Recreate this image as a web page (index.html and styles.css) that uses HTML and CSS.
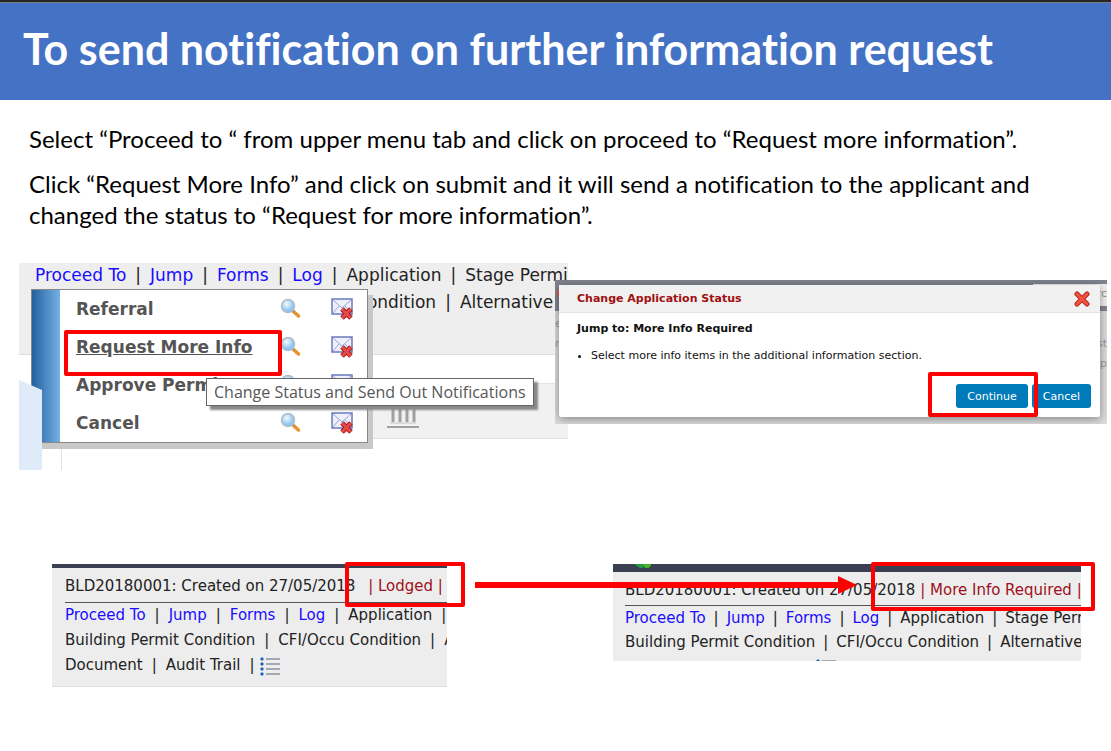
FILE: index.html
```html
<!DOCTYPE html>
<html lang="en">
<head>
    <meta charset="UTF-8">
    <meta name="viewport" content="width=device-width, initial-scale=1.0">
    <title>To send notification on further information request</title>
    <link rel="stylesheet" href="styles.css">
</head>
<body>
    <svg class="defs" aria-hidden="true">
        <defs>
            <radialGradient id="glass" cx="40%" cy="35%">
                <stop offset="0" stop-color="#f4fbff"/>
                <stop offset="1" stop-color="#8cc6f4"/>
            </radialGradient>
            <symbol id="search" viewBox="0 0 22 22">
                <path d="M13.500 13.500 18.500 18" stroke="#e8932c" stroke-width="3.500" stroke-linecap="round"/>
                <path d="M12 12l2 2" stroke="#8a8f98" stroke-width="2"/>
                <circle cx="8" cy="8" r="6.500" fill="url(#glass)" stroke="#b4bcc8" stroke-width="1.500"/>
            </symbol>
            <symbol id="mail" viewBox="0 0 22 22">
                <rect x="1" y="1" width="20" height="15" fill="#eef1fb" stroke="#6a78bd" stroke-width="1.500"/>
                <path d="M2 2l9 8L20 2M2 15l6-7M20 15l-6-7" fill="none" stroke="#98a3d2"/>
                <path d="M11 11l9 9M20 11l-9 9" stroke="#a31c1c" stroke-width="5"/>
                <path d="M11 11l9 9M20 11l-9 9" stroke="#e84848" stroke-width="3"/>
            </symbol>
        </defs>
    </svg>

    <header>
        <h1>To send notification on further information request</h1>
    </header>

    <main>
        <div class="intro">
            <p>Select “Proceed to “ from upper menu tab and click on proceed to “Request more information”.</p>
            <p>Click “Request More Info” and click on submit and it will send a notification to the applicant and changed the status to “Request for more information”.</p>
        </div>

        <div class="row steps">
            <div class="figure menu-figure">
                <div class="shot menu-shot">
                    <div class="menu-top">
                        <nav class="tabs">
                            <a href="#">Proceed To</a><i>|</i><a href="#">Jump</a><i>|</i><a href="#">Forms</a><i>|</i><a href="#">Log</a><i>|</i><span>Application</span><i>|</i><span>Stage Permit</span>
                        </nav>
                        <div class="tabs">
                            <span>Building Permit Condition</span><i>|</i><span>CFI/Occu Condition</span><i>|</i><span>Alternative</span>
                        </div>
                    </div>
                    <div class="menu-band">
                        <svg class="bank" viewBox="0 0 34 34"><path d="M1 33h32" stroke="#a0a0a0" stroke-width="2"/><path d="M7 10v18M14 10v18M21 10v18M28 10v18" stroke="#a0a0a0" stroke-width="3"/><path d="M4 29h26" stroke="#c4c4c4"/></svg>
                    </div>
                    <ul class="popup">
                        <li><a href="#">Referral</a><svg><use href="#search"/></svg><svg><use href="#mail"/></svg></li>
                        <li class="active"><a href="#">Request More Info</a><svg><use href="#search"/></svg><svg><use href="#mail"/></svg></li>
                        <li><a href="#">Approve Permit</a><svg><use href="#search"/></svg><svg><use href="#mail"/></svg></li>
                        <li><a href="#">Cancel</a><svg><use href="#search"/></svg><svg><use href="#mail"/></svg></li>
                    </ul>
                    <div class="corner"></div>
                    <div class="tooltip">Change Status and Send Out Notifications</div>
                </div>
                <div class="mark mark-request"></div>
            </div>

            <div class="figure dialog-figure">
                <div class="shot backdrop">
                    <div class="behind-left"><b></b><span>e</span><span>m</span></div>
                    <div class="behind-right"><em>rc</em><span>st</span><span>Ap</span></div>
                    <section class="dialog">
                        <div class="dialog-head">
                            <h2>Change Application Status</h2>
                            <button class="close" aria-label="Close">
                                <svg viewBox="0 0 16 16"><path d="M3 3l10 10M13 3L3 13" stroke="#b5291f" stroke-width="5" stroke-linecap="round"/><path d="M3 3l10 10M13 3L3 13" stroke="#f4513f" stroke-width="3" stroke-linecap="round"/></svg>
                            </button>
                        </div>
                        <div class="dialog-body">
                            <h3>Jump to: More Info Required</h3>
                            <ul><li>Select more info items in the additional information section.</li></ul>
                            <div class="actions">
                                <button class="btn">Continue</button>
                                <button class="btn">Cancel</button>
                            </div>
                        </div>
                    </section>
                </div>
                <div class="mark mark-continue"></div>
            </div>
        </div>

        <div class="row result">
            <div class="figure before">
                <div class="shot record">
                    <div class="strip"></div>
                    <p class="status">BLD20180001: Created on 27/05/2018 <span>| Lodged |</span></p>
                    <nav class="tabs">
                        <a href="#">Proceed To</a><i>|</i><a href="#">Jump</a><i>|</i><a href="#">Forms</a><i>|</i><a href="#">Log</a><i>|</i><span>Application</span><i>|</i>
                    </nav>
                    <div class="tabs"><span>Building Permit Condition</span><i>|</i><span>CFI/Occu Condition</span><i>|</i><span>Alternative</span></div>
                    <div class="tabs">
                        <span>Document</span><i>|</i><span>Audit Trail</span><i>|</i>
                        <svg class="list" viewBox="0 0 20 20"><path d="M6 3h14M6 8h14M6 13h14M6 18h14" stroke="#8b949e" stroke-width="1.500"/><path d="M2 1l2 2-2 2-2-2zM2 6l2 2-2 2-2-2zM2 11l2 2-2 2-2-2zM2 16l2 2-2 2-2-2z" fill="#1d5fc4"/></svg>
                    </div>
                </div>
                <div class="mark mark-lodged"></div>
            </div>

            <div class="figure after">
                <div class="shot record">
                    <div class="strip"><svg viewBox="0 0 18 4"><path d="M0 0h9v4H6z" fill="#1f9d3c"/><ellipse cx="13" cy="0" rx="4" ry="4" fill="#45b827"/></svg></div>
                    <p class="status">BLD20180001: Created on 27/05/2018 <span>| More Info Required |</span></p>
                    <nav class="tabs">
                        <a href="#">Proceed To</a><i>|</i><a href="#">Jump</a><i>|</i><a href="#">Forms</a><i>|</i><a href="#">Log</a><i>|</i><span>Application</span><i>|</i><span>Stage Permit</span>
                    </nav>
                    <div class="tabs"><span>Building Permit Condition</span><i>|</i><span>CFI/Occu Condition</span><i>|</i><span>Alternative Solution</span></div>
                    <div class="tabs">
                        <span>Document</span><i>|</i><span>Audit Trail</span><i>|</i>
                        <svg class="list" viewBox="0 0 20 20"><path d="M6 3h14M6 8h14" stroke="#8b949e" stroke-width="1.500"/><path d="M2 1l2 2-2 2-2-2z" fill="#1d5fc4"/></svg>
                    </div>
                </div>
                <div class="mark mark-required"></div>
            </div>

            <svg class="arrow" viewBox="0 0 382 18"><path d="M0 6h363V0l19 9-19 9v-6H0z" fill="#f00"/></svg>
        </div>
    </main>
</body>
</html>
```
FILE: styles.css
```css
* {
    box-sizing: border-box;
}
body {
    margin: 0;
    background: #fff;
    color: #000;
    font-family: Lato, "Liberation Sans", sans-serif;
    font-variant-ligatures: none;
}
h1, h2, h3, p, ul {
    margin: 0;
    padding: 0;
}
svg {
    display: block;
    fill: none;
}
.defs {
    position: absolute;
    width: 0;
    height: 0;
}
header {
    border-top: 2px solid #262626;
    background: #4472c4;
    padding: 19px 23px 23px;
    box-shadow: inset 0 1px #7f7f7f;
}
h1 {
    color: #fff;
    font-size: 43px;
    line-height: 56px;
    white-space: nowrap;
}
.intro {
    padding: 23px 29px 0;
    font-size: 24px;
    line-height: 31px;
}
.intro p {
    margin-bottom: 14px;
}
.row {
    display: flex;
    align-items: flex-start;
    position: relative;
    font-family: "DejaVu Sans", sans-serif;
}
.figure {
    position: relative;
    min-width: 0;
}
.shot {
    position: relative;
    overflow: hidden;
    white-space: nowrap;
}
.mark {
    position: absolute;
    border: 4px solid #f00;
    border-radius: 2px;
}

/* top tabs */
.tabs {
    display: flex;
    align-items: center;
    gap: 9px;
    color: #222;
}
.tabs a {
    color: #1a0dff;
    text-decoration: none;
}
.tabs i {
    font-style: normal;
}

/* step 1: menu */
.steps {
    padding: 19px 4px 0 19px;
}
.menu-figure {
    flex: 549;
}
.menu-shot {
    height: 207px;
}
.menu-shot::before {
    content: "";
    position: absolute;
    left: 42px;
    bottom: 0;
    height: 24px;
    border-left: 1px solid #e2e2e2;
}
.menu-top {
    height: 92px;
    padding-left: 16px;
    background: #eee;
    border-bottom: 1px solid #ddd;
    font-size: 17px;
    line-height: 30px;
}
.menu-top .tabs:first-child {
    line-height: 24px;
}
.menu-band {
    height: 56px;
    margin: 28px 0 0 42px;
    padding-left: 325px;
    background: #f1f1f1;
    border: solid #e2e2e2;
    border-width: 1px 0;
}
.bank {
    width: 34px;
    height: 34px;
    margin-top: 10px;
}
.popup {
    position: absolute;
    top: 26px;
    left: 12px;
    width: 337px;
    padding: 0 14px 0 44px;
    list-style: none;
    background: linear-gradient(90deg, #23609f, #76b1e4) no-repeat 0 0 / 28px 100%, #fff;
    border: 1px solid #888;
    box-shadow: 5px 6px #c8c8c8;
}
.popup li {
    display: flex;
    align-items: center;
    height: 38px;
    font-size: 17px;
    font-weight: bold;
}
.popup a {
    flex: 1;
    color: #555;
    text-decoration: none;
}
.popup .active a {
    text-decoration: underline;
}
.popup svg {
    width: 22px;
    height: 22px;
}
.popup svg + svg {
    margin-left: 29px;
}
.corner {
    position: absolute;
    left: 0;
    bottom: 0;
    width: 23px;
    height: 90px;
    background: #dfebf8;
    clip-path: polygon(0 0, 100% 10px, 100% 100%, 0 100%);
}
.tooltip {
    position: absolute;
    top: 115px;
    left: 187px;
    padding: 0 7px;
    background: #fff;
    border: 1px solid #666;
    box-shadow: 4px 4px 2px #888;
    color: #575757;
    font-family: "Open Sans", sans-serif;
    font-size: 16px;
    line-height: 26px;
}
.mark-request {
    top: 67px;
    left: 45px;
    width: 218px;
    height: 46px;
}

/* step 2: dialog */
.dialog-figure {
    flex: 552;
    margin: 17px 0 0 -13px;
}
.backdrop {
    padding: 5px 7px 7px 4px;
    background: linear-gradient(#80838f 31px, #dcdcdc 31px);
    color: #999;
    font-size: 11px;
}
.behind-left, .behind-right {
    position: absolute;
    top: 0;
    left: 0;
    display: flex;
    flex-direction: column;
    line-height: 20px;
    padding-top: 34px;
}
.behind-left b {
    position: absolute;
    top: 8px;
    left: 2px;
    width: 10px;
    height: 10px;
    border-radius: 50%;
    background: #f05050;
}
.behind-right {
    left: auto;
    right: 0;
    width: 74px;
    align-items: flex-end;
    padding-top: 4px;
}
.behind-right em {
    width: 100%;
    height: 22px;
    margin-bottom: 28px;
    background: #eee;
    font-style: normal;
    text-align: right;
}
.dialog {
    position: relative;
    background: #fff;
    border-radius: 2px;
    box-shadow: 0 2px 10px rgba(0, 0, 0, 0.4);
    color: #111;
}
.dialog-head {
    display: flex;
    justify-content: space-between;
    align-items: center;
    height: 28px;
    padding: 0 10px 0 18px;
    background: #f1f1f1;
    border-bottom: 1px solid #e2e2e2;
}
h2, h3 {
    font-size: 11px;
    line-height: 16px;
}
h2 {
    color: #a01010;
}
.close {
    width: 16px;
    height: 16px;
    padding: 0;
    border: 0;
    background: none;
}
.dialog-body {
    padding: 8px 9px 9px 18px;
}
.dialog-body ul {
    margin: 11px 0 20px;
    padding-left: 14px;
    line-height: 16px;
}
.actions {
    display: flex;
    justify-content: flex-end;
    gap: 4px;
}
.btn {
    height: 24px;
    padding: 0 11px;
    border: 0;
    border-radius: 3px;
    background: #007ab8;
    color: #fff;
    font: 11px "DejaVu Sans", sans-serif;
}
.mark-continue {
    right: 69px;
    bottom: 7px;
    width: 110px;
    height: 45px;
}

/* status before and after */
.result {
    padding: 94px 30px 0 52px;
    gap: 166px;
}
.before {
    flex: 395;
}
.after {
    flex: 468;
}
.record {
    padding-left: 13px;
    background: #ededed;
    border-bottom: 1px solid #ddd;
    font-size: 15px;
    line-height: 25px;
}
.before .record {
    height: 123px;
}
.after .record {
    height: 97px;
    padding-left: 12px;
    line-height: 24px;
    border: 0;
}
.after .tabs {
    gap: 8px;
}
.after .tabs:last-child {
    margin-top: 2px;
}
.strip {
    height: 4px;
    margin-left: -13px;
    background: #3a3f52;
}
.after .strip {
    height: 8px;
}
.strip svg {
    width: 18px;
    height: 4px;
    margin-left: 22px;
}
.status {
    height: 35px;
    border-bottom: 1px solid #555;
    color: #222;
    line-height: 36px;
}
.after .status {
    height: 34px;
}
.status span {
    color: #a01020;
}
.before .status span {
    margin-left: 8px;
}
.list {
    width: 20px;
    height: 20px;
    margin-left: -4px;
}
.mark-lodged {
    top: -2px;
    right: -18px;
    width: 120px;
    height: 45px;
}
.mark-required {
    top: -2px;
    right: -14px;
    width: 224px;
    height: 49px;
}
.arrow {
    position: absolute;
    top: 106px;
    left: 475px;
    width: 382px;
    height: 18px;
}
```
